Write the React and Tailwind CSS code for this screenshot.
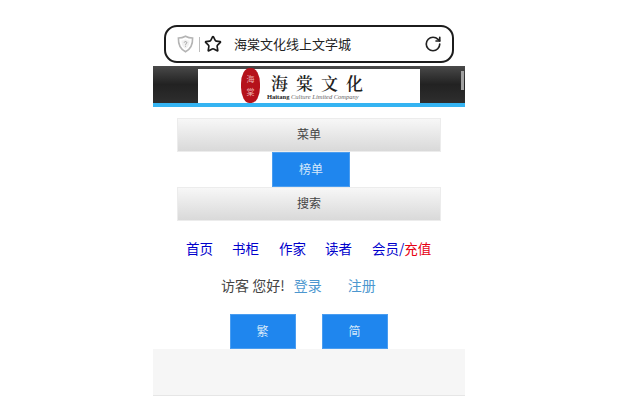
import React from 'react';
import { Star, RotateCw } from 'lucide-react';

const cjk = { fontFamily: '"Noto Sans CJK SC", "Liberation Sans", sans-serif' };

// Gray gradient menu button
function GrayButton({ children }) {
  return (
    <div className="h-[34px] mx-6 pb-[2px] flex items-center justify-center text-[12px] text-[#444] bg-gradient-to-b from-[#f7f7f7] to-[#d9d9d9] border border-[#ececec]">
      {children}
    </div>
  );
}

function BlueButton({ className, children }) {
  return (
    <div className={`pb-[2px] flex items-center justify-center text-[12px] text-[#d5e8fa] bg-[#1f86ee] border border-[#4a9df0] ${className}`}>
      {children}
    </div>
  );
}

function ShieldIcon() {
  return (
    <svg width="17" height="18" viewBox="0 0 17 18" fill="none">
      <path d="M8.5 1.2 C6 2.6 3.8 3 1.4 3 C1.2 9 3 14 8.5 16.8 C14 14 15.8 9 15.6 3 C13.2 3 11 2.6 8.5 1.2 Z" stroke="#b4b4b4" strokeWidth="1.6" />
      <path d="M8.5 4.2 C7 5 5.8 5.4 4.4 5.4 C4.4 9 5.6 12 8.5 13.8 C11.4 12 12.6 9 12.6 5.4 C11.2 5.4 10 5 8.5 4.2 Z" fill="#f1f1f1" />
      <path d="M7.2 7.6 C7.3 6.2 9.8 6.2 9.8 7.7 C9.8 8.7 8.5 8.7 8.5 9.8 M8.5 10.8 V11.6" stroke="#999" strokeWidth="0.9" />
    </svg>
  );
}

function Seal() {
  return (
    <div className="w-[19px] h-[35px] -mt-[1px] bg-[#b5121b] rounded-[45%] flex flex-col items-center justify-center gap-[3px] text-[8px] leading-[10px] text-[#eeb4b4] shrink-0">
      <span>海</span>
      <span>棠</span>
    </div>
  );
}

export default function App() {
  return (
    <div className="w-[644px] h-[408px] bg-white overflow-hidden" style={cjk}>
      <div className="w-[312px] ml-[153px] pt-[25px]">
        {/* Address bar */}
        <div className="h-[38px] mx-[11px] border-2 border-[#1c1c1c] rounded-[13px] flex items-center pl-[11px] pr-[10px]">
          <ShieldIcon />
          <div className="w-px h-[15px] bg-[#bdbdbd] ml-[5px]" />
          <Star className="w-[18px] h-[18px] ml-[4px] text-[#1a1a1a]" strokeWidth={2.2} />
          <span className="ml-[12px] text-[13px] text-[#222] flex-1 pb-[1px]">海棠文化线上文学城</span>
          <RotateCw className="w-[18px] h-[18px] text-[#222]" strokeWidth={2.2} />
        </div>

        {/* Logo header */}
        <div className="relative h-[41px] mt-[3px] bg-gradient-to-b from-[#4a4a4a] via-[#222] to-[#2e2e2e] border-b-4 border-[#35b4f2] flex justify-center pt-[3px]">
          <div className="w-[222px] h-[34px] bg-white flex items-center pl-[43px]">
            <Seal />
            <div className="ml-[7px] mt-[1px]">
              <div className="pl-[4px] text-[17px] leading-[20px] tracking-[8px] font-semibold text-[#222] whitespace-nowrap" style={{ fontFamily: '"Noto Serif CJK SC", "Noto Sans CJK SC", serif' }}>
                海棠文化
              </div>
              <div className="text-[6.5px] leading-[7px] text-[#666] whitespace-nowrap" style={{ fontFamily: '"Liberation Serif", serif' }}>
                <b className="text-[#222]">Haitang</b> <i>Culture Limited Company</i>
              </div>
            </div>
          </div>
          <div className="absolute right-[1px] top-[5px] w-[3px] h-[19px] bg-[#a0a0a0]" />
        </div>

        {/* Menu buttons */}
        <div className="mt-[11px]">
          <GrayButton>菜单</GrayButton>
          <BlueButton className="w-[78px] h-[35px] ml-[119px]">榜单</BlueButton>
          <GrayButton>搜索</GrayButton>
        </div>

        {/* Nav links */}
        <div className="mt-[18px] h-[18px] flex pl-[33px] text-[13.5px] leading-[18px] text-[#0000cc]">
          <span>首页</span>
          <span className="ml-[19px]">书柜</span>
          <span className="ml-[20px]">作家</span>
          <span className="ml-[19px]">读者</span>
          <span className="ml-[20px]">会员/<span className="text-[#e60012]">充值</span></span>
        </div>

        {/* Greeting */}
        <div className="mt-[19px] h-[18px] flex pl-[68px] text-[14px] leading-[18px] text-[#444]">
          <span>访客 您好!</span>
          <span className="ml-[9px] text-[#4c97cf]">登录</span>
          <span className="ml-[26px] text-[#4c97cf]">注册</span>
        </div>

        {/* Language switch */}
        <div className="mt-[20px] flex justify-center gap-[26px] pr-[1px]">
          <BlueButton className="w-[66px] h-[35px]">繁</BlueButton>
          <BlueButton className="w-[66px] h-[35px]">简</BlueButton>
        </div>

        {/* Footer */}
        <div className="h-[47px] bg-[#f6f6f6] border-b border-[#e6e6e6]" />
      </div>
    </div>
  );
}
